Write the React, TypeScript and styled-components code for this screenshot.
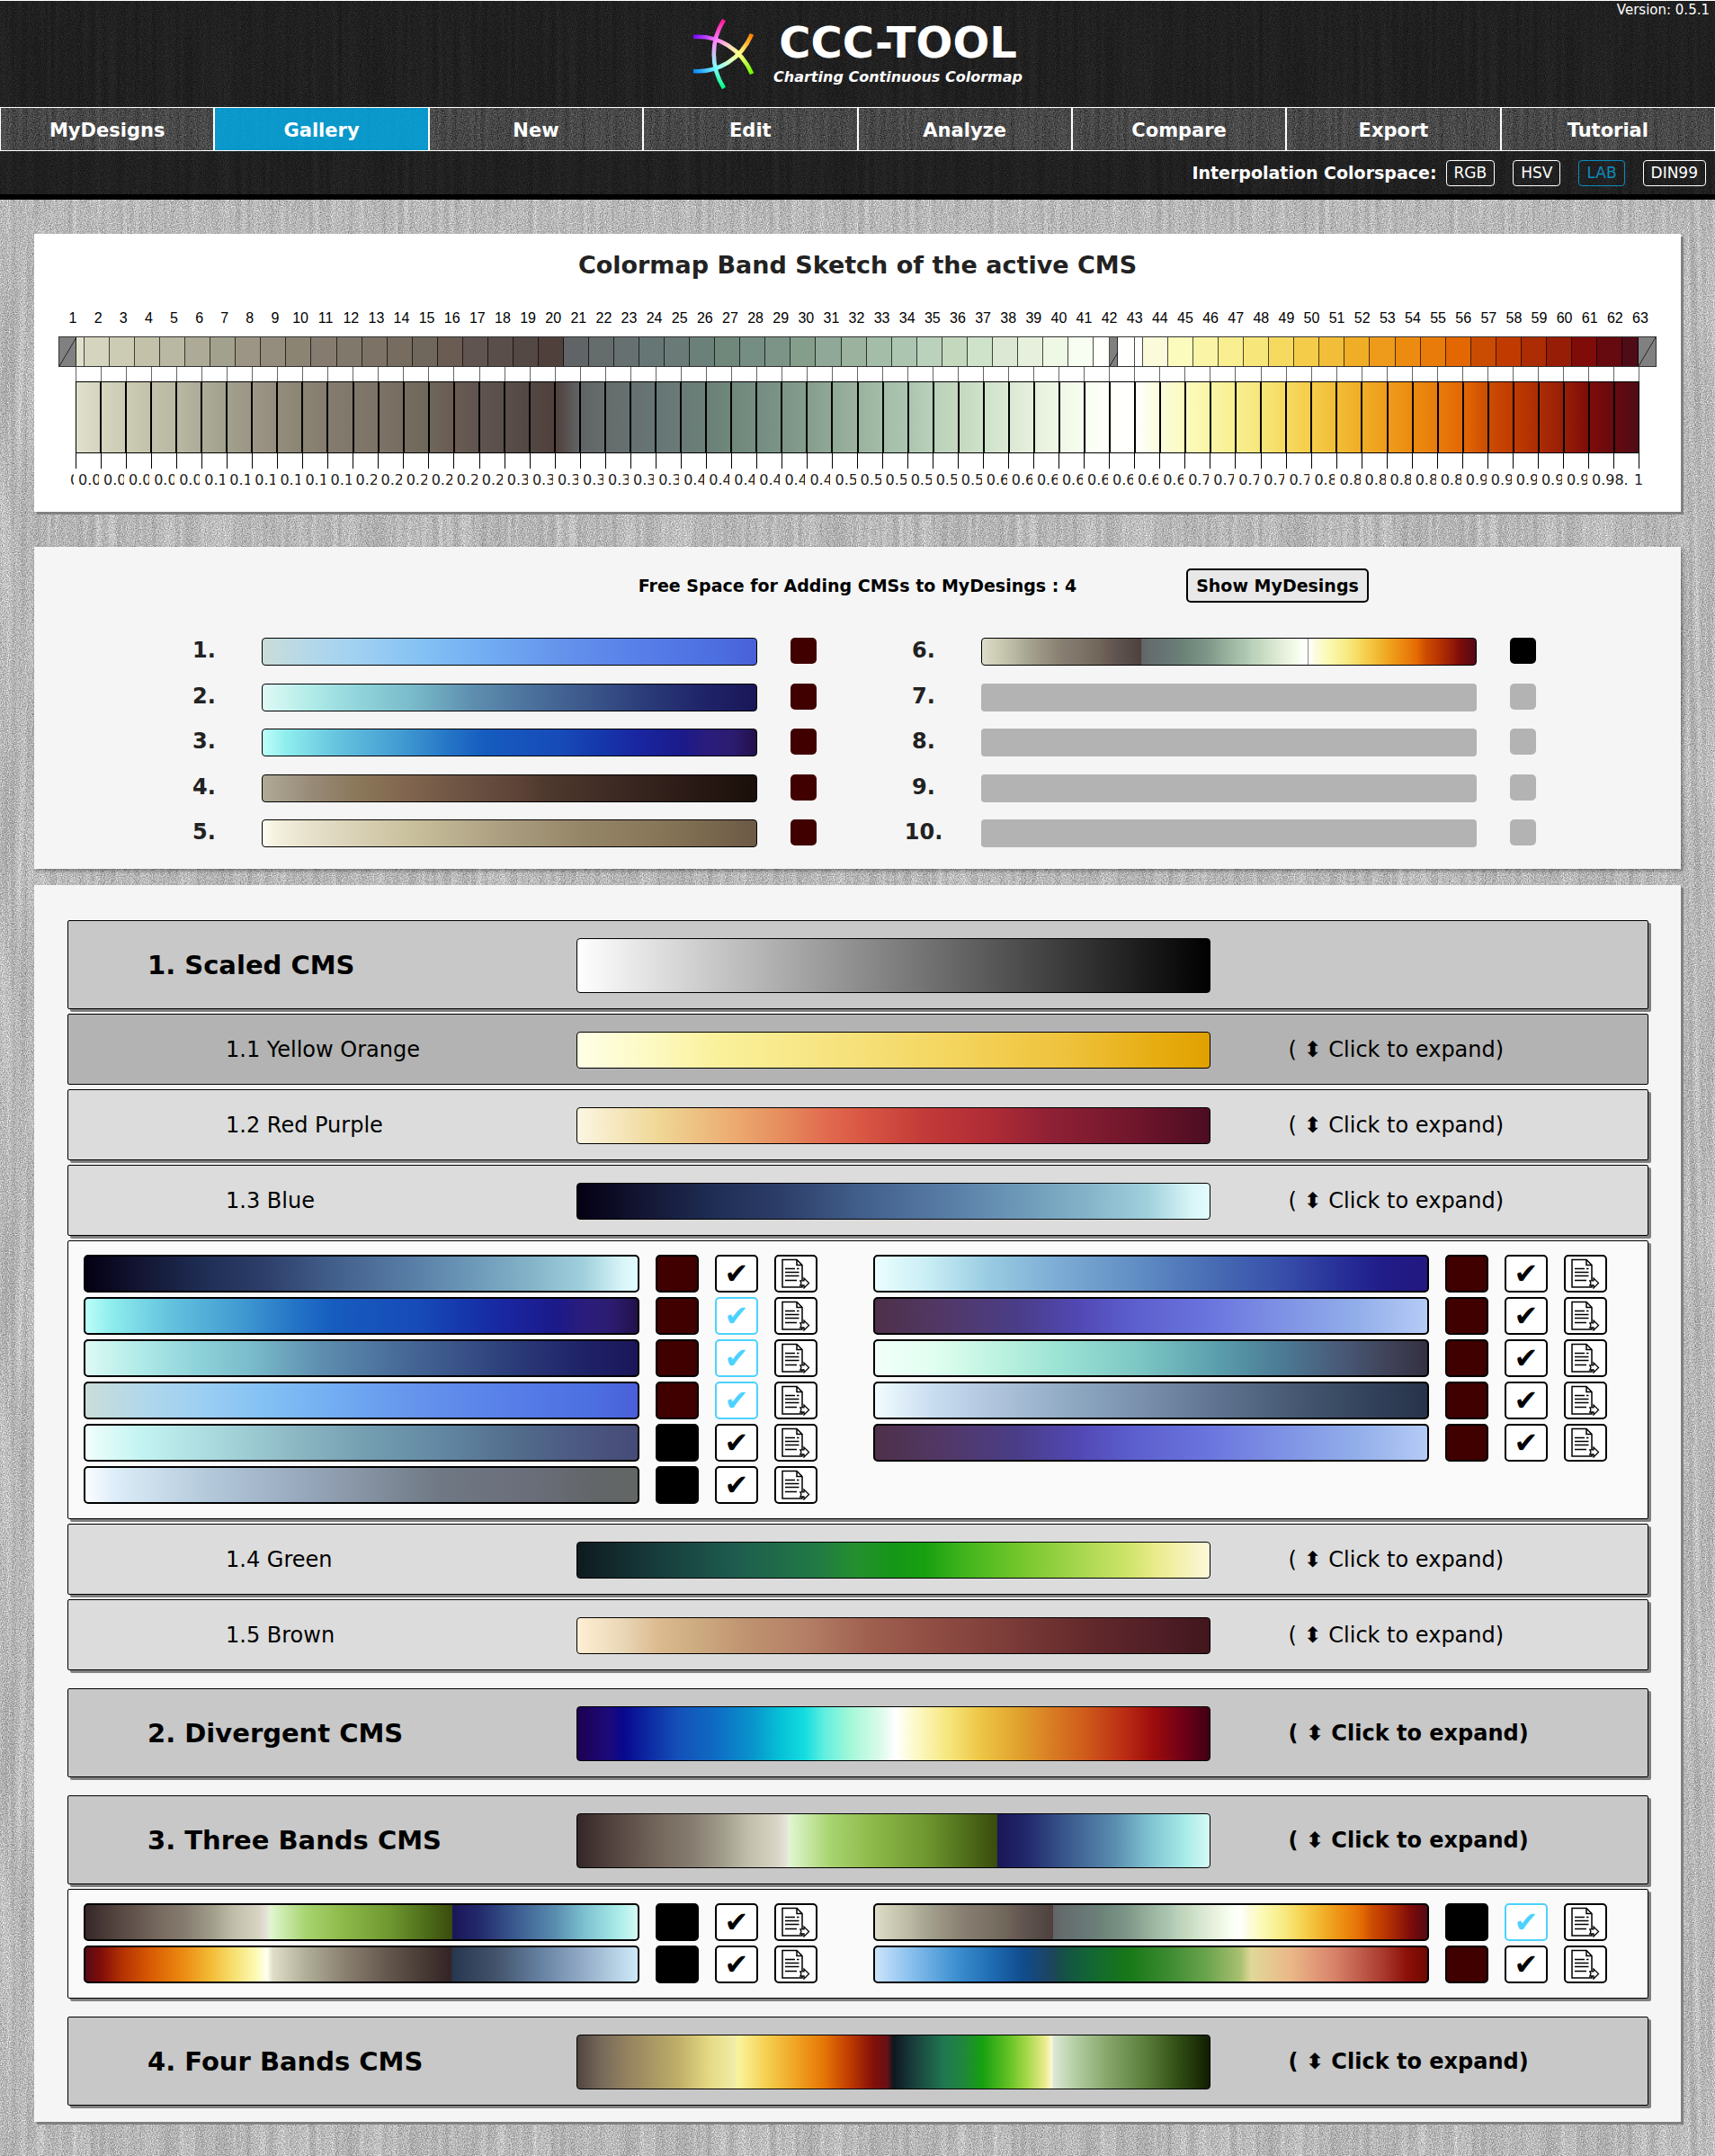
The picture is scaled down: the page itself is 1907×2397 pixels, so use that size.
import React from "react";
import styled, { createGlobalStyle, css } from "styled-components";

/* ---------- colour data ---------- */

const KEY_COLORS = [
  "#e0e0cd", "#d5d4bf", "#cccbb4", "#c3c1aa", "#b9b8a3", "#adab97", "#a1a18d", "#9c9585", "#948d7d",
  "#8b8473", "#857b6f", "#80786b", "#7d7266", "#766c60", "#6f675b", "#6a5b53", "#605450", "#594e49",
  "#534843", "#50403c", "#606466", "#656d6c", "#667070", "#667674", "#6a7a77", "#6a8078", "#70877b",
  "#758d82", "#7c9487", "#859d8b", "#90a897", "#9ab29e", "#a3bda8", "#acc5b0", "#bad1bb", "#c4d8be",
  "#cfe2ca", "#dce8d4", "#e6f0dc", "#eff7e5", "#f8fff2", "#fffffb", "#fffffd", "#fbfbdb", "#fcfbbe",
  "#faf5a6", "#f9ef90", "#f7e67a", "#f6da60", "#f5cc49", "#f2bd38", "#f0ad26", "#ee9b1b", "#ec8b10",
  "#e87b0a", "#e36703", "#ca4c02", "#c13b00", "#ac2c04", "#971d06", "#7f0c09", "#660a0f", "#4f0c17",
];

const REF_VALUES = [
  "0", "0.02", "0.03", "0.05", "0.06", "0.08", "0.10", "0.11", "0.13", "0.15", "0.16", "0.18", "0.20",
  "0.21", "0.23", "0.25", "0.26", "0.28", "0.30", "0.31", "0.33", "0.34", "0.36", "0.38", "0.39", "0.40",
  "0.41", "0.43", "0.45", "0.46", "0.48", "0.50", "0.51", "0.53", "0.55", "0.56", "0.58", "0.60", "0.61",
  "0.63", "0.64", "0.65", "0.66", "0.67", "0.69", "0.70", "0.72", "0.75", "0.77", "0.79", "0.80", "0.82",
  "0.84", "0.85", "0.87", "0.89", "0.90", "0.92", "0.94", "0.95", "0.97", "0.98.", "1",
];

const activeStops = (() => {
  const left = KEY_COLORS.slice(0, 20).map((c, i) => `${c} ${((i / 19) * 32.3).toFixed(2)}%`);
  const mid = KEY_COLORS.slice(20, 42).map((c, i) => `${c} ${(32.4 + (i / 21) * 33.5).toFixed(2)}%`);
  const right = KEY_COLORS.slice(42).map((c, i) => `${c} ${(66 + (i / 20) * 34).toFixed(2)}%`);
  return { left, mid, right };
})();

const ramp = (stops: string) => `linear-gradient(to right, ${stops})`;

const MAPS = {
  sky: ramp("#cbddd8 0, #b3d8ea 10%, #9fd0f2 20%, #82c0f4 33%, #72adf2 45%, #6593ec 60%, #567de8 78%, #4c6ee0 92%, #4a5fd8 100%"),
  teal: ramp("#e0faf5 0, #b0ebe8 10%, #8fd3da 20%, #7abccb 30%, #5f90b0 42%, #4a6f9b 55%, #3a5489 67%, #2a3a78 78%, #1f2268 90%, #1a1658 100%"),
  ocean: ramp("#bffffa 0, #8eeded 5%, #66c4df 15%, #429bd2 28%, #2474c6 38%, #165cbf 45%, #174bb8 60%, #1538ad 68%, #1926a0 76%, #1b1a8a 85%, #2a1c7c 90%, #2c1c70 95%, #221048 100%"),
  umber: ramp("#afab96 0, #988a78 10%, #8a7658 20%, #80644d 30%, #6d5443 40%, #5c4237 52%, #4e3a2d 57%, #3f2b24 70%, #2c1b17 85%, #1a0f0a 100%"),
  sand: ramp("#fffdf3 0, #f3f0dd 3%, #e6e0cb 10%, #c9c09c 30%, #a99c7e 50%, #958567 65%, #887659 80%, #7d6b50 88%, #6c5946 100%"),
  active: ramp([...activeStops.left, ...activeStops.mid, ...activeStops.right].join(", ")),
  activeLined: ramp(
    [...activeStops.left, ...activeStops.mid, "#8c8c8c 65.9%", "#8c8c8c 66.1%", ...activeStops.right.map((s, i) => (i ? s : "#fffffd 66.1%"))].join(", ")
  ),
  grey: ramp("#ffffff 0, #000000 100%"),
  yellow: ramp("#ffffe6 0, #fdfac8 10%, #faf19c 22%, #f6e078 45%, #f4d45c 60%, #eec13a 78%, #e6ac10 92%, #e0a000 100%"),
  red: ramp("#fcf6e4 0, #efd795 13%, #ecaa70 25%, #e58a5c 33%, #e26c50 39%, #d95744 45%, #c23a38 55%, #b02c36 65%, #8e2034 75%, #70162c 88%, #4c0c22 100%"),
  night: ramp("#030012 0, #0b0a22 5%, #141735 11%, #1f2e55 22%, #2c3d68 32%, #425f8b 45%, #5a80a8 60%, #6d99b8 70%, #83b2c8 80%, #a0d0dc 90%, #d8f5f8 97%, #e4fdff 100%"),
  azure: ramp("#ebffff 0, #c8edf4 10%, #98cbe2 21%, #7fafd6 32%, #5f8cc3 48%, #4567b2 63%, #3850aa 73%, #252a94 86%, #201c88 92%, #241880 100%"),
  violet: ramp("#4e3048 0, #523868 13%, #4a3d88 26%, #5248b4 37%, #5b5dcc 46%, #6a74de 60%, #7c8ee4 72%, #92aeea 87%, #b6ccf6 100%"),
  mint: ramp("#f2fffa 0, #e0fff0 11%, #b8f0de 24%, #9ae2d4 34%, #7cc6c4 48%, #5a9eac 62%, #4c7c96 73%, #485a78 84%, #3f4258 93%, #332f40 100%"),
  slate: ramp("#f2fdff 0, #c8dcf0 11%, #aabfd8 24%, #8ea8c2 36%, #7a90ac 48%, #5f7390 62%, #465872 76%, #34445c 88%, #26324a 100%"),
  haze: ramp("#f2fffc 0, #c4f4f2 10%, #a8d8dc 24%, #8cb8c4 38%, #74a0b2 50%, #6084a0 66%, #526c8c 78%, #4c5a84 88%, #454a76 100%"),
  fog: ramp("#fdfeff 0, #dcecf8 6%, #b4cadb 22%, #9aabc0 38%, #8794a4 50%, #6f7884 64%, #6a6e7a 80%, #626668 92%, #626664 100%"),
  green: ramp("#0e1a1e 0, #163a3a 12%, #1e5c4e 25%, #207a44 38%, #248f2f 44%, #159618 50%, #18a010 55%, #40b41c 61%, #74c62c 70%, #a0d44a 78%, #cfe46a 87%, #ecec90 92%, #fdf8dc 100%"),
  brown: ramp("#ffefd4 0, #ead8b8 7%, #dcba90 13%, #cfae82 18%, #bf9270 27%, #b47f66 36%, #a06050 46%, #8e4c42 57%, #7c3c38 68%, #642a2c 80%, #501e26 92%, #40161c 100%"),
  divergent: ramp("#1c0050 0, #1c0a7a 5%, #08088e 7.5%, #0a1e9c 10%, #1450b8 16%, #0e6cc4 22%, #0896cc 28%, #06c0d6 32%, #14dce0 36%, #60eee0 39%, #a0f8d8 43%, #dcfbea 48%, #ffffff 50.3%, #fcf8c0 54%, #f6e478 59%, #ecc444 64%, #e0a02c 70%, #d87c24 75%, #d05c1c 80%, #b82812 87%, #9c0c0c 91%, #6c0018 96%, #3c0014 100%"),
  three: ramp("#342628 0, #50403c 5%, #786c60 14%, #857b6f 18%, #a09c8a 23%, #c0beaa 27%, #d8d4c4 31.5%, #e6e2da 33%, #e0f6d0 33.6%, #a8d470 40%, #8cb848 47%, #6f9830 55%, #4c6a18 62%, #3a4c0c 66.3%, #1a1658 66.4%, #22286c 71%, #38568c 77%, #5a8eb0 85%, #7cc0d0 90%, #a8ebe8 96%, #d8fbf4 100%"),
  ember: ramp("#4f0c17 0, #800c0a 3%, #b43202 7%, #d85a02 12%, #ec8c12 18%, #f4bc38 23%, #f6e070 27%, #fcfab4 31%, #fffff0 33%, #e0dec8 34%, #b0ae98 40%, #8a8070 47%, #62564c 55%, #443632 62%, #342426 66%, #283850 66.5%, #42526a 74%, #6480a0 82%, #94acc8 90%, #d0ecfa 100%"),
  coast: ramp("#cfe6fb 0, #90c4f0 6%, #3c8fd0 15%, #1c68b0 22%, #104c8c 27%, #1e4460 32%, #165048 34%, #126634 39%, #187818 46%, #3c8a30 53%, #6aa44c 60%, #a8c070 66%, #e0d898 68%, #eab888 75%, #d8826a 83%, #a8382c 92%, #8c1008 96%, #6c0800 100%"),
  four: ramp("#4f4440 0, #786a5a 4%, #93825f 8%, #bfae68 16%, #e6da84 21%, #f0eca8 25%, #faf49c 25.5%, #f5cf50 30%, #efa020 35%, #e67606 39%, #c03c00 43%, #800e0a 47%, #681018 49%, #0e181e 50%, #183c3c 53%, #207850 58%, #20863c 61%, #16a010 64%, #60c024 68%, #a4d848 71%, #ecec90 74%, #fdf8d8 75%, #dce8d4 75.2%, #b0cb9e 79%, #84a468 84%, #587c38 90%, #304c14 95%, #101c00 100%"),
};

type MapName = keyof typeof MAPS;

/* ---------- page ---------- */

/* Grain plus vertical streaks; `mean` is the average grey the tile settles on. */
const texture = (grain: number, streak: number, mean: number) => {
  const base = mean - (grain + streak) / 2;
  const grey = "1 0 0 0 0 1 0 0 0 0 1 0 0 0 0 0 0 0 0 1";
  const svg = `<svg xmlns='http://www.w3.org/2000/svg' width='512' height='512'><filter id='f' x='0' y='0' width='100%' height='100%' color-interpolation-filters='sRGB'><feTurbulence type='fractalNoise' baseFrequency='0.85' numOctaves='2' seed='3' stitchTiles='stitch'/><feColorMatrix values='${grey}' result='n'/><feTurbulence type='fractalNoise' baseFrequency='0.16 0.003' numOctaves='3' seed='8' stitchTiles='stitch'/><feColorMatrix values='${grey}' result='s'/><feComposite in='n' in2='s' operator='arithmetic' k1='0' k2='${grain}' k3='${streak}' k4='${base}'/></filter><rect width='512' height='512' filter='url(#f)'/></svg>`;
  return `url("data:image/svg+xml,${encodeURIComponent(svg).replace(/'/g, "%27")}")`;
};

const LIGHT_TEXTURE = texture(0.65, 0.2, 0.72);
const DARK_TEXTURE = texture(0.2, 0.06, 0.04);
const NAV_TEXTURE = texture(0.48, 0.14, 0.225);

const GlobalStyle = createGlobalStyle`
  *, *::before, *::after { box-sizing: border-box; }
  body {
    margin: 0;
    background: #b6b6b6 ${LIGHT_TEXTURE};
    color: #000;
    font-family: "DejaVu Sans", Verdana, sans-serif;
  }
  button, input { font-family: inherit; color: inherit; margin: 0; }
`;

const Header = styled.header`
  border-top: 1px solid #fff;
  border-bottom: 6px solid #000;
  background: #1b1b1b ${DARK_TEXTURE};
  color: #fff;
`;

const Masthead = styled.div`
  display: flex;
  justify-content: center;
  gap: 22px;
  height: 118px;
  padding-top: 20px;
  position: relative;
`;

const Logo = styled.svg`
  width: 68px;
  height: 78px;
`;

const Brand = styled.div`
  display: flex;
  flex-direction: column;
  align-items: center;
`;

const BrandName = styled.h1`
  margin: 0;
  font-size: 48px;
  line-height: 52px;
`;

const Tagline = styled.p`
  margin: 0;
  font-size: 16px;
  line-height: 25px;
  font-weight: bold;
  font-style: italic;
`;

const Version = styled.span`
  position: absolute;
  top: 0;
  right: 6px;
  font-size: 15px;
  line-height: 20px;
`;

const Nav = styled.nav`
  display: grid;
  grid-template-columns: repeat(8, 1fr);
`;

const NavLink = styled.a<{ $current?: boolean }>`
  padding-top: 3px;
  border: 1px solid #fff;
  background: ${(p) => (p.$current ? "linear-gradient(rgba(0, 166, 226, 0.85), rgba(0, 166, 226, 0.85)), " : "")}
    ${NAV_TEXTURE};
  color: #fff;
  font-size: 21px;
  line-height: 44px;
  font-weight: bold;
  text-align: center;
  text-decoration: none;
`;

const SpaceBar = styled.div`
  display: flex;
  justify-content: flex-end;
  align-items: center;
  gap: 20px;
  height: 48px;
  padding-right: 10px;
`;

const SpaceLabel = styled.span`
  margin-right: -10px;
  font-size: 19px;
  font-weight: bold;
`;

const SpaceButton = styled.button<{ $on?: boolean }>`
  height: 29px;
  padding: 0 8px;
  border: 1px solid currentColor;
  border-radius: 4px;
  background: none;
  color: ${(p) => (p.$on ? "#0e8bbd" : "#fff")};
  font-size: 17px;
`;

const Main = styled.main`
  display: flex;
  flex-direction: column;
  padding: 38px;
`;

/* ---------- band sketch ---------- */

const SketchPanel = styled.section`
  margin-bottom: 39px;
  padding: 19px 27px 24px;
  background: #fff;
  box-shadow: 3px 3px 0 #808080;
`;

const SketchTitle = styled.h2`
  margin: 0 0 34px;
  color: #222;
  font-size: 27px;
  line-height: 32px;
  text-align: center;
`;

const Numbers = styled.div`
  display: grid;
  grid-template-columns: repeat(63, 1fr);
  padding: 0 4px 11px 2px;
  font-family: "Liberation Sans", Arial, sans-serif;
  font-size: 16px;
  line-height: 18px;
  text-align: center;
`;

const KeyBand = styled.div`
  display: grid;
  grid-template-columns: 19px 9px repeat(40, 1fr) 18px 9px 19px 9px repeat(19, 1fr) 18px 19px;
  height: 34px;
  border: 1px solid #333;
`;

const KeyCell = styled.div`
  border-right: 1px solid rgba(0, 0, 0, 0.7);
  &:last-child { border-right: 0; }
`;

const VoidCell = styled(KeyCell)`
  background: linear-gradient(to bottom right, #808080 48%, #333 49%, #333 51%, #808080 52%) 0 0 / 19px 100%;
`;

const Marks = styled.div<{ $tall?: boolean }>`
  display: grid;
  grid-template-columns: repeat(62, 1fr);
  height: ${(p) => (p.$tall ? 17 : 16)}px;
  margin: 0 19px;
  border-right: 1px solid ${(p) => (p.$tall ? "#000" : "#666")};
  & > i { border-left: 1px solid ${(p) => (p.$tall ? "#000" : "#666")}; }
`;

const Segments = styled.div`
  display: grid;
  grid-template-columns: repeat(62, 1fr);
  height: 80px;
  margin: 0 19px;
`;

const Segment = styled.div`
  border: 1px solid #000;
`;

const RefRow = styled.div`
  display: grid;
  grid-template-columns: 9px repeat(60, minmax(0, 1fr)) 47px 28px;
  padding-left: 10px;
`;

const RefInput = styled.input`
  width: 100%;
  min-width: 0;
  height: 24px;
  padding: 0 2px 0 3px;
  border: 0;
  background: none;
  color: #222;
  font-size: 16px;
`;

/* ---------- my designs ---------- */

const DesignsPanel = styled.section`
  margin-bottom: 18px;
  padding: 24px 0;
  background: #f5f5f5;
  box-shadow: 2px 2px 4px rgba(0, 0, 0, 0.4);
`;

const DesignsHead = styled.div`
  display: grid;
  grid-template-columns: 1fr auto 1fr;
  align-items: center;
  margin-bottom: 39px;
  font-size: 19px;
  font-weight: bold;
`;

const FreeSpace = styled.span`
  grid-column: 2;
`;

const ShowButton = styled.button`
  justify-self: start;
  height: 38px;
  margin-left: 122px;
  padding: 0 9px;
  border: 2px solid #000;
  border-radius: 5px;
  background: #e8e8e8;
  font-size: 19px;
  font-weight: bold;
`;

const Slots = styled.ol`
  display: grid;
  grid-template-columns: 1fr 1fr;
  grid-template-rows: repeat(5, 31px);
  grid-auto-flow: column;
  align-content: space-between;
  column-gap: 55px;
  min-height: 233px;
  margin: 0;
  padding: 0 161px 0 125px;
  list-style: none;
`;

const Slot = styled.li`
  display: grid;
  grid-template-columns: 128px 1fr 66px;
  color: #222;
  font-size: 24px;
  line-height: 29px;
  font-weight: bold;
  text-align: center;
`;

const SlotBar = styled.div<{ $map?: MapName }>`
  border-radius: 4px;
  ${(p) =>
    p.$map
      ? css`
          border: 1px solid #000;
          background: ${MAPS[p.$map]} border-box;
        `
      : css`
          background: #b3b3b3;
        `}
`;

const SlotSwatch = styled.div<{ $color: string }>`
  justify-self: end;
  width: 29px;
  height: 29px;
  border-radius: 5px;
  background: ${(p) => p.$color};
`;

/* ---------- gallery ---------- */

const GalleryPanel = styled.section`
  display: flex;
  flex-direction: column;
  gap: 20px;
  padding: 39px 36px 18px 37px;
  background: #f5f5f5;
  box-shadow: 3px 3px 0 #808080;
`;

const Group = styled.div`
  display: flex;
  flex-direction: column;
  gap: 5px;
`;

const rowBox = css`
  border: 1px solid #000;
  border-radius: 2px;
  box-shadow: 3px 3px 0 #808080;
`;

const Fold = styled.button<{ $hover?: boolean }>`
  ${rowBox}
  display: grid;
  grid-template-columns: 32.2% 40.1% 1fr;
  align-items: center;
  width: 100%;
  padding: 19px 0 17px;
  background: ${(p) => (p.$hover ? "#b3b3b3" : "#dcdcdc")};
  ${(p) => p.$hover && "box-shadow: none;"}
  font-size: 24px;
  line-height: 28px;
  text-align: left;
  cursor: pointer;
`;

const GroupFold = styled(Fold)`
  background: #c8c8c8;
  font-weight: bold;
`;

const FoldName = styled.span`
  padding: 0 0 2px 175px;
`;

const GroupName = styled.span`
  padding: 0 0 2px 88px;
  font-size: 29px;
`;

const FoldHint = styled.span`
  padding: 0 0 2px 87px;
`;

const PreviewBar = styled.span<{ $map: MapName; $large?: boolean }>`
  height: ${(p) => (p.$large ? 61 : 41)}px;
  border: 1px solid #000;
  border-radius: 4px;
  background: ${(p) => MAPS[p.$map]} border-box;
`;

const Drawer = styled.div`
  ${rowBox}
  display: grid;
  grid-template-columns: 1fr 1fr;
  row-gap: 5px;
  padding: 15px 0 16px;
  background: #fafafa;
`;

const Entry = styled.div`
  display: grid;
  grid-template-columns: 1fr 48px 48px 48px;
  column-gap: 18px;
  height: 42px;
  padding: 0 45px 0 17px;
`;

const box = css`
  border: 2px solid #000;
  border-radius: 5px;
`;

const EntryBar = styled.div<{ $map: MapName }>`
  ${box}
  background: ${(p) => MAPS[p.$map]} border-box;
`;

const EntrySwatch = styled.div<{ $color: string }>`
  ${box}
  background: ${(p) => p.$color};
`;

const EntryButton = styled.button<{ $on?: boolean }>`
  ${box}
  display: flex;
  align-items: center;
  justify-content: center;
  padding: 0;
  background: #fff;
  font-size: 32px;
  line-height: 32px;
  ${(p) =>
    p.$on &&
    css`
      border-color: #4dd2ff;
      color: #4dd2ff;
    `}
`;

const PageIcon = styled.svg`
  width: 32px;
  height: 34px;
`;

const DARK = "#400000";
const BLACK = "#000000";
const EMPTY = "#b3b3b3";

type Item = { map: MapName; color: string; on?: boolean };

const slots: { map?: MapName; color: string }[] = [
  { map: "sky", color: DARK },
  { map: "teal", color: DARK },
  { map: "ocean", color: DARK },
  { map: "umber", color: DARK },
  { map: "sand", color: DARK },
  { map: "activeLined", color: BLACK },
  { color: EMPTY },
  { color: EMPTY },
  { color: EMPTY },
  { color: EMPTY },
];

const blueMaps: Item[] = [
  { map: "night", color: DARK },
  { map: "azure", color: DARK },
  { map: "ocean", color: DARK, on: true },
  { map: "violet", color: DARK },
  { map: "teal", color: DARK, on: true },
  { map: "mint", color: DARK },
  { map: "sky", color: DARK, on: true },
  { map: "slate", color: DARK },
  { map: "haze", color: BLACK },
  { map: "violet", color: DARK },
  { map: "fog", color: BLACK },
];

const threeBandMaps: Item[] = [
  { map: "three", color: BLACK },
  { map: "active", color: BLACK, on: true },
  { map: "ember", color: BLACK },
  { map: "coast", color: DARK },
];

const HINT = "( ⬍ Click to expand)";

function LogoMark() {
  return (
    <Logo viewBox="0 0 68 78" fill="none" strokeWidth="4.6" aria-hidden="true">
      <defs>
        <linearGradient id="arcA" gradientUnits="userSpaceOnUse" x1="0" y1="1" x2="0" y2="77">
          <stop offset="0" stopColor="#ff1493" />
          <stop offset="0.3" stopColor="#ff80ff" />
          <stop offset="0.5" stopColor="#c8c0f0" />
          <stop offset="0.7" stopColor="#80ffff" />
          <stop offset="1" stopColor="#00ff80" />
        </linearGradient>
        <linearGradient id="arcB" gradientUnits="userSpaceOnUse" x1="1" y1="18" x2="66" y2="60">
          <stop offset="0" stopColor="#7000ff" />
          <stop offset="0.32" stopColor="#ff80ff" />
          <stop offset="0.52" stopColor="#ffd8c0" />
          <stop offset="0.72" stopColor="#ffff80" />
          <stop offset="1" stopColor="#70ff00" />
        </linearGradient>
        <linearGradient id="arcC" gradientUnits="userSpaceOnUse" x1="1" y1="60" x2="66" y2="18">
          <stop offset="0" stopColor="#0080ff" />
          <stop offset="0.32" stopColor="#80ffff" />
          <stop offset="0.52" stopColor="#d8ffc8" />
          <stop offset="0.72" stopColor="#ffff80" />
          <stop offset="1" stopColor="#ff8000" />
        </linearGradient>
      </defs>
      <path d="M35 1C20 24 20 54 35 77" stroke="url(#arcA)" />
      <path d="M1 20C28 18 54 33 66 61" stroke="url(#arcB)" />
      <path d="M1 58C28 60 54 45 66 17" stroke="url(#arcC)" />
    </Logo>
  );
}

function ExportGlyph() {
  return (
    <PageIcon viewBox="0 0 32 34" fill="none" stroke="#000" strokeWidth="1.5" aria-hidden="true">
      <path d="M1 1.5H17L23 7.5V32H1Z" fill="#fff" />
      <path d="M17 1.5V7.5H23" />
      <path d="M4 11.5H15M17 11.5H19.5M4 15.5H19.5M4 19.5H19.5M4 24.5H17" strokeWidth="1.7" />
      <path d="M20.8 24.8H25V22L30.5 27.5L25 33V30H20.8L22 27.5Z" fill="#fff" strokeWidth="1.3" />
    </PageIcon>
  );
}

function Entries({ items }: { items: Item[] }) {
  return (
    <Drawer>
      {items.map((item, i) => (
        <Entry key={i}>
          <EntryBar $map={item.map} />
          <EntrySwatch $color={item.color} />
          <EntryButton $on={item.on} aria-pressed={!!item.on}>✔</EntryButton>
          <EntryButton aria-label="Open in editor">
            <ExportGlyph />
          </EntryButton>
        </Entry>
      ))}
    </Drawer>
  );
}

function SubRow({ name, map, hover }: { name: string; map: MapName; hover?: boolean }) {
  return (
    <Fold $hover={hover}>
      <FoldName>{name}</FoldName>
      <PreviewBar $map={map} />
      <FoldHint>{HINT}</FoldHint>
    </Fold>
  );
}

function GroupRow({ name, map, hint = true }: { name: string; map: MapName; hint?: boolean }) {
  return (
    <GroupFold>
      <GroupName>{name}</GroupName>
      <PreviewBar $map={map} $large />
      {hint && <FoldHint>{HINT}</FoldHint>}
    </GroupFold>
  );
}

const keyCells = (from: number, to: number) =>
  KEY_COLORS.slice(from, to).map((c, i) => <KeyCell key={from + i} style={{ background: c }} />);

function BandSketch() {
  return (
    <SketchPanel>
      <SketchTitle>Colormap Band Sketch of the active CMS</SketchTitle>
      <Numbers>
        {KEY_COLORS.map((_, i) => (
          <span key={i}>{i + 1}</span>
        ))}
      </Numbers>
      <KeyBand>
        <VoidCell />
        {keyCells(0, 42)}
        <VoidCell />
        {keyCells(42, 43)}
        {keyCells(42, 63)}
        <VoidCell />
      </KeyBand>
      <Marks>
        {KEY_COLORS.slice(1).map((_, i) => (
          <i key={i} />
        ))}
      </Marks>
      <Segments>
        {KEY_COLORS.slice(1).map((c, i) => (
          <Segment key={i} style={{ background: `linear-gradient(to right, ${KEY_COLORS[i]}, ${c})` }} />
        ))}
      </Segments>
      <Marks $tall>
        {KEY_COLORS.slice(1).map((_, i) => (
          <i key={i} />
        ))}
      </Marks>
      <RefRow>
        {REF_VALUES.map((v, i) => (
          <RefInput key={i} defaultValue={v} aria-label={`Key ${i + 1}`} />
        ))}
      </RefRow>
    </SketchPanel>
  );
}

const PAGES = ["MyDesigns", "Gallery", "New", "Edit", "Analyze", "Compare", "Export", "Tutorial"];
const SPACES = ["RGB", "HSV", "LAB", "DIN99"];

export default function App() {
  return (
    <>
      <GlobalStyle />
      <Header>
        <Masthead>
          <LogoMark />
          <Brand>
            <BrandName>CCC-TOOL</BrandName>
            <Tagline>Charting Continuous Colormap</Tagline>
          </Brand>
          <Version>Version: 0.5.1</Version>
        </Masthead>
        <Nav>
          {PAGES.map((p) => (
            <NavLink key={p} href={`#${p}`} $current={p === "Gallery"}>
              {p}
            </NavLink>
          ))}
        </Nav>
        <SpaceBar>
          <SpaceLabel>Interpolation Colorspace:</SpaceLabel>
          {SPACES.map((s) => (
            <SpaceButton key={s} $on={s === "LAB"}>
              {s}
            </SpaceButton>
          ))}
        </SpaceBar>
      </Header>
      <Main>
        <BandSketch />
        <DesignsPanel>
          <DesignsHead>
            <FreeSpace>Free Space for Adding CMSs to MyDesings : 4</FreeSpace>
            <ShowButton>Show MyDesings</ShowButton>
          </DesignsHead>
          <Slots>
            {slots.map((s, i) => (
              <Slot key={i}>
                <span>{i + 1}.</span>
                <SlotBar $map={s.map} />
                <SlotSwatch $color={s.color} />
              </Slot>
            ))}
          </Slots>
        </DesignsPanel>
        <GalleryPanel>
          <Group>
            <GroupRow name="1. Scaled CMS" map="grey" hint={false} />
            <SubRow name="1.1 Yellow Orange" map="yellow" hover />
            <SubRow name="1.2 Red Purple" map="red" />
            <SubRow name="1.3 Blue" map="night" />
            <Entries items={blueMaps} />
            <SubRow name="1.4 Green" map="green" />
            <SubRow name="1.5 Brown" map="brown" />
          </Group>
          <Group>
            <GroupRow name="2. Divergent CMS" map="divergent" />
          </Group>
          <Group>
            <GroupRow name="3. Three Bands CMS" map="three" />
            <Entries items={threeBandMaps} />
          </Group>
          <Group>
            <GroupRow name="4. Four Bands CMS" map="four" />
          </Group>
        </GalleryPanel>
      </Main>
    </>
  );
}
